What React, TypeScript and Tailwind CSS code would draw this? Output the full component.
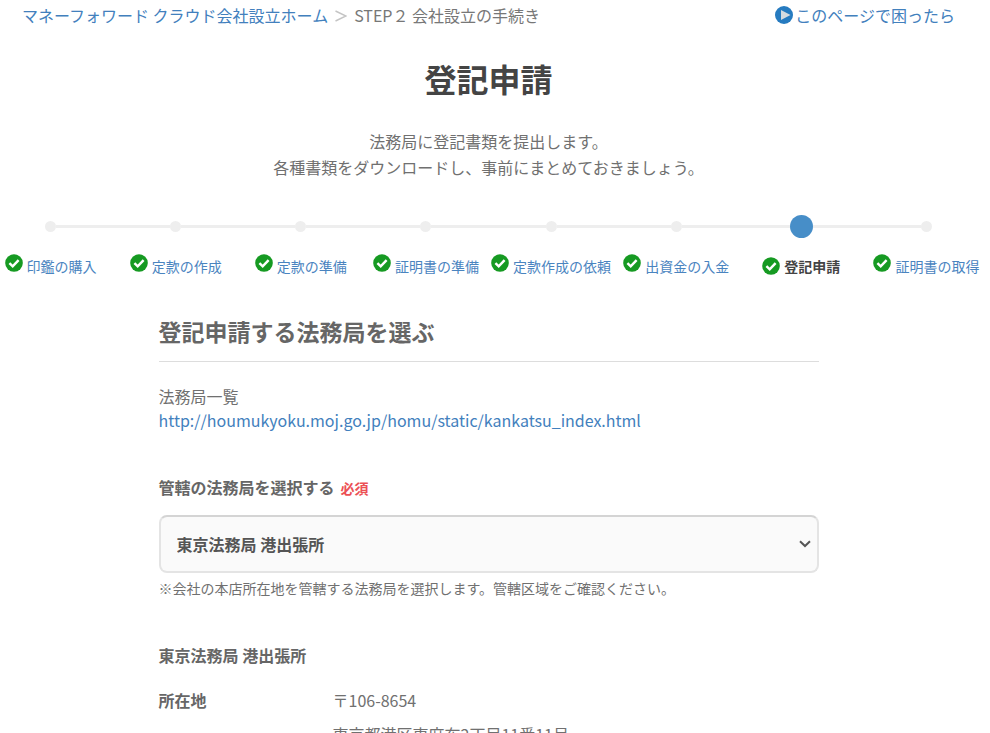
import React from 'react';
import clsx from 'clsx';

const steps = [
  { id: 1, name: '印鑑の購入' },
  { id: 2, name: '定款の作成' },
  { id: 3, name: '定款の準備' },
  { id: 4, name: '証明書の準備' },
  { id: 5, name: '定款作成の依頼' },
  { id: 6, name: '出資金の入金' },
  { id: 7, name: '登記申請', current: true },
  { id: 8, name: '証明書の取得' },
];

const CheckIcon = () => (
  <svg viewBox="0 0 18 18" className="h-[18px] w-[18px] shrink-0" aria-hidden="true">
    <circle cx="9" cy="9" r="8.8" fill="#169a22" />
    <path d="M4.4 9.2 L7.7 12.3 L13.6 6.2" fill="none" stroke="#fff" strokeWidth="2.5" />
  </svg>
);

const PlayIcon = () => (
  <svg viewBox="0 0 18 18" className="h-[18px] w-[18px] shrink-0" aria-hidden="true">
    <circle cx="9" cy="9" r="9" fill="#267bc0" />
    <path d="M6 4 L15.5 9 L6 14 Z" fill="#d6dbdf" />
  </svg>
);

const Breadcrumbs = () => (
  <div className="flex justify-between pl-[22px] pr-[22px] pt-[3px] leading-6">
    <nav className="flex gap-[7px]">
      <a href="#home" className="text-[#4280bd]">
        マネーフォワード クラウド会社設立ホーム
      </a>
      <svg viewBox="0 0 12 12" className="mt-[7px] h-3 w-3" aria-hidden="true">
        <path d="M0.5 1 L11 6 L0.5 11" fill="none" stroke="#c4c4c4" strokeWidth="1.4" />
      </svg>
      <span className="text-[#777]">STEP２ 会社設立の手続き</span>
    </nav>
    <a href="#help" className="flex gap-[2px] text-[#4280bd]">
      <span className="pt-[3px]">
        <PlayIcon />
      </span>
      このページで困ったら
    </a>
  </div>
);

const StepBar = () => (
  <ol className="-mx-3 mt-[34px] grid grid-cols-8">
    {steps.map((step, index) => (
      <li key={step.id} className="flex flex-col items-center">
        {/* линия и точка шага */}
        <div className="flex h-6 w-full items-center">
          <span className={clsx('h-[3px] flex-1', index > 0 && 'bg-[#eee]')} />
          <span
            className={clsx(
              'rounded-full',
              step.current ? 'h-[23px] w-[23px] bg-[#478ec8]' : 'h-[11px] w-[11px] bg-[#eee]'
            )}
          />
          <span className={clsx('h-[3px] flex-1', index < steps.length - 1 && 'bg-[#eee]')} />
        </div>
        <a
          href={`#step-${step.id}`}
          className={clsx(
            'mt-4 flex gap-1 whitespace-nowrap text-sm leading-6',
            step.current ? 'items-center font-bold text-[#444]' : 'text-[#4a84bf]'
          )}
        >
          <CheckIcon />
          <span>{step.name}</span>
        </a>
      </li>
    ))}
  </ol>
);

export default function App() {
  return (
    <div className="min-h-screen bg-white pr-[13px] font-['Noto_Sans_CJK_JP',sans-serif] text-base text-[#707070]">
      <Breadcrumbs />

      <h1 className="mt-[27px] text-center text-[32px] font-bold leading-12 text-[#444]">登記申請</h1>
      <p className="mt-[26px] text-center leading-[26px]">
        法務局に登記書類を提出します。
        <br />
        各種書類をダウンロードし、事前にまとめておきましょう。
      </p>

      <StepBar />

      <main className="mx-auto mt-[37px] max-w-[660px]">
        <h2 className="border-b border-[#ddd] pb-[14px] text-[23px] font-bold leading-8 text-[#666]">
          登記申請する法務局を選ぶ
        </h2>

        <p className="mt-[22px] leading-6">
          法務局一覧
          <br />
          <a href="http://houmukyoku.moj.go.jp/homu/static/kankatsu_index.html" className="text-[#4280bd]">
            http://houmukyoku.moj.go.jp/homu/static/kankatsu_index.html
          </a>
        </p>

        <label htmlFor="office" className="mt-[43px] block font-bold leading-6 text-[#666]">
          管轄の法務局を選択する
          <span className="ml-[6px] text-sm text-[#ec5055]">必須</span>
        </label>
        <div className="relative mt-4">
          <select
            id="office"
            className="h-[58px] w-full appearance-none rounded-lg border-2 border-[#e4e4e4] border-t-[#d4d4d4] bg-[#fafafa] px-4 font-bold text-[#555]"
          >
            <option>東京法務局 港出張所</option>
          </select>
          <svg viewBox="0 0 12 8" className="pointer-events-none absolute right-2 top-[25px] h-2 w-3" aria-hidden="true">
            <path d="M1 1.2 L6 6 L11 1.2" fill="none" stroke="#555" strokeWidth="2" />
          </svg>
        </div>
        <p className="mt-[3px] text-sm leading-6">
          ※会社の本店所在地を管轄する法務局を選択します。管轄区域をご確認ください。
        </p>

        <h3 className="mt-[43px] font-bold leading-6 text-[#666]">東京法務局 港出張所</h3>
        <dl className="mt-4 flex">
          <dt className="w-[174px] font-bold leading-[34px] text-[#666]">所在地</dt>
          <dd className="leading-[34px]">
            〒106-8654
            <br />
            東京都港区東麻布2丁目11番11号
          </dd>
        </dl>
      </main>
    </div>
  );
}
